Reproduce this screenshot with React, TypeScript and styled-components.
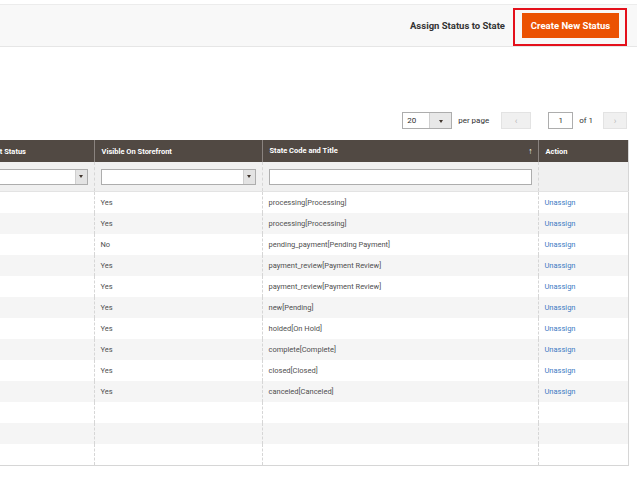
import React from 'react';
import styled, { createGlobalStyle } from 'styled-components';

const GlobalStyle = createGlobalStyle`
  html, body {
    margin: 0;
    padding: 0;
    background: #fff;
    overflow: hidden;
  }
  body {
    font-family: Roboto, "Liberation Sans", sans-serif;
    color: #303030;
  }
`;

interface IRow {
  visible?: string;
  state?: string;
}

const rows: IRow[] = [
  { visible: 'Yes', state: 'processing[Processing]' },
  { visible: 'Yes', state: 'processing[Processing]' },
  { visible: 'No', state: 'pending_payment[Pending Payment]' },
  { visible: 'Yes', state: 'payment_review[Payment Review]' },
  { visible: 'Yes', state: 'payment_review[Payment Review]' },
  { visible: 'Yes', state: 'new[Pending]' },
  { visible: 'Yes', state: 'holded[On Hold]' },
  { visible: 'Yes', state: 'complete[Complete]' },
  { visible: 'Yes', state: 'closed[Closed]' },
  { visible: 'Yes', state: 'canceled[Canceled]' },
  {},
  {},
  {},
];

const Style = {
  Page: styled.div`
    width: 640px;
    height: 480px;
    padding-top: 3px;
    box-sizing: border-box;
    border-top: 1px solid #ffffff;
  `,
  Actions: styled.div`
    width: 637px;
    height: 43px;
    box-sizing: border-box;
    background: #f8f8f8;
    border-top: 1px solid #ececec;
    border-bottom: 1px solid #e6e6e6;
    display: flex;
    align-items: center;
    justify-content: flex-end;
    padding-right: 10px;
  `,
  ActionLink: styled.span`
    font-size: 9.5px;
    font-weight: 700;
    color: #333;
    margin-right: 8px;
  `,
  Highlight: styled.div`
    border: 2px solid #e4101b;
    padding: 3px 6px 6px 7px;
    margin-top: 2px;
  `,
  Primary: styled.button`
    display: block;
    width: 97px;
    height: 25px;
    border: 0;
    padding: 0;
    background: #eb5202;
    color: #fff;
    font-family: Roboto, "Liberation Sans", sans-serif;
    font-size: 9.5px;
    font-weight: 700;
  `,
  Pager: styled.div`
    display: flex;
    align-items: center;
    justify-content: flex-end;
    width: 627px;
    margin-top: 65px;
    height: 17px;
    font-size: 8px;
    color: #303030;
  `,
  PerPage: styled.div`
    display: flex;
    width: 50px;
    height: 17px;
    box-sizing: border-box;
    border: 1px solid #adadad;
    background: #fff;
  `,
  PerPageValue: styled.span`
    flex: 1;
    padding-left: 4px;
    line-height: 15px;
  `,
  PerPageArrow: styled.span`
    width: 21px;
    background: #e8e8e8;
    border-left: 1px solid #cfcfcf;
    display: flex;
    align-items: center;
    justify-content: center;
    &::after {
      content: '';
      border-left: 2.5px solid transparent;
      border-right: 2.5px solid transparent;
      border-top: 3px solid #41362f;
      margin-top: 2px;
    }
  `,
  Label: styled.span<{ gap: number }>`
    margin-left: ${({ gap }) => gap}px;
  `,
  NavButton: styled.span<{ gap: number; width: number }>`
    margin-left: ${({ gap }) => gap}px;
    width: ${({ width }) => width}px;
    height: 17px;
    box-sizing: border-box;
    background: #f0f0f0;
    border: 1px solid #e3e3e3;
    color: #b8b8b8;
    font-size: 9px;
    display: flex;
    align-items: center;
    justify-content: center;
  `,
  PageInput: styled.span`
    margin-left: 17px;
    width: 25px;
    height: 17px;
    box-sizing: border-box;
    border: 1px solid #adadad;
    background: #fff;
    display: flex;
    align-items: center;
    justify-content: center;
  `,
  Table: styled.table`
    margin-top: 11px;
    margin-left: -29px;
    width: 657px;
    table-layout: fixed;
    border-collapse: collapse;
    font-size: 7.5px;
    border-right: 1px solid #d6d6d6;
    border-bottom: 1px solid #d6d6d6;
  `,
  Th: styled.th`
    height: 22px;
    padding: 0 7px;
    background: #514943;
    color: #fff;
    font-weight: 700;
    text-align: left;
    border-left: 1px solid #8a837f;
    &:first-child {
      border-left: 0;
    }
  `,
  SortArrow: styled.span`
    float: right;
    font-size: 8.5px;
    font-weight: 700;
    margin-right: -2px;
  `,
  FilterCell: styled.td`
    height: 29px;
    padding: 0 6px;
    background: #f0f0f0;
    border-left: 1px dashed #d6d6d6;
    border-bottom: 1px solid #e3e3e3;
    &:first-child {
      border-left: 0;
    }
  `,
  Select: styled.div`
    display: flex;
    height: 16px;
    box-sizing: border-box;
    border: 1px solid #adadad;
    background: #fff;
    justify-content: flex-end;
  `,
  SelectArrow: styled.span`
    width: 11px;
    background: #e3e3e3;
    border-left: 1px solid #cfcfcf;
    display: flex;
    align-items: center;
    justify-content: center;
    &::after {
      content: '';
      border-left: 2px solid transparent;
      border-right: 2px solid transparent;
      border-top: 3px solid #41362f;
    }
  `,
  TextInput: styled.div`
    height: 16px;
    box-sizing: border-box;
    border: 1px solid #adadad;
    background: #fff;
  `,
  Tr: styled.tr<{ striped: boolean }>`
    background: ${({ striped }) => (striped ? '#f5f5f5' : '#fff')};
  `,
  Td: styled.td`
    height: 21px;
    padding: 0 6px;
    color: #4f4f4f;
    white-space: nowrap;
    border-left: 1px dashed #d6d6d6;
    &:first-child {
      border-left: 0;
    }
  `,
  Link: styled.a`
    color: #3d7bc4;
    text-decoration: none;
  `,
};

const Actions = () => (
  <Style.Actions>
    <Style.ActionLink>Assign Status to State</Style.ActionLink>
    <Style.Highlight>
      <Style.Primary>Create New Status</Style.Primary>
    </Style.Highlight>
  </Style.Actions>
);

const Pager = () => (
  <Style.Pager>
    <Style.PerPage>
      <Style.PerPageValue>20</Style.PerPageValue>
      <Style.PerPageArrow />
    </Style.PerPage>
    <Style.Label gap={6}>per page</Style.Label>
    <Style.NavButton gap={12} width={30}>
      &lsaquo;
    </Style.NavButton>
    <Style.PageInput>1</Style.PageInput>
    <Style.Label gap={6}>of 1</Style.Label>
    <Style.NavButton gap={10} width={24}>
      &rsaquo;
    </Style.NavButton>
  </Style.Pager>
);

const Grid = () => (
  <Style.Table>
    <colgroup>
      <col style={{ width: 123 }} />
      <col style={{ width: 168 }} />
      <col style={{ width: 276 }} />
      <col style={{ width: 90 }} />
    </colgroup>
    <thead>
      <tr>
        <Style.Th>Default Status</Style.Th>
        <Style.Th>Visible On Storefront</Style.Th>
        <Style.Th>
          State Code and Title
          <Style.SortArrow>↑</Style.SortArrow>
        </Style.Th>
        <Style.Th>Action</Style.Th>
      </tr>
      <tr>
        <Style.FilterCell>
          <Style.Select>
            <Style.SelectArrow />
          </Style.Select>
        </Style.FilterCell>
        <Style.FilterCell>
          <Style.Select>
            <Style.SelectArrow />
          </Style.Select>
        </Style.FilterCell>
        <Style.FilterCell>
          <Style.TextInput />
        </Style.FilterCell>
        <Style.FilterCell />
      </tr>
    </thead>
    <tbody>
      {rows.map((row, i) => (
        <Style.Tr key={i} striped={i % 2 === 1}>
          <Style.Td />
          <Style.Td>{row.visible}</Style.Td>
          <Style.Td>{row.state}</Style.Td>
          <Style.Td>
            {row.state && <Style.Link href="#">Unassign</Style.Link>}
          </Style.Td>
        </Style.Tr>
      ))}
    </tbody>
  </Style.Table>
);

const App = () => (
  <>
    <GlobalStyle />
    <Style.Page>
      <Actions />
      <Pager />
      <Grid />
    </Style.Page>
  </>
);

export default App;
